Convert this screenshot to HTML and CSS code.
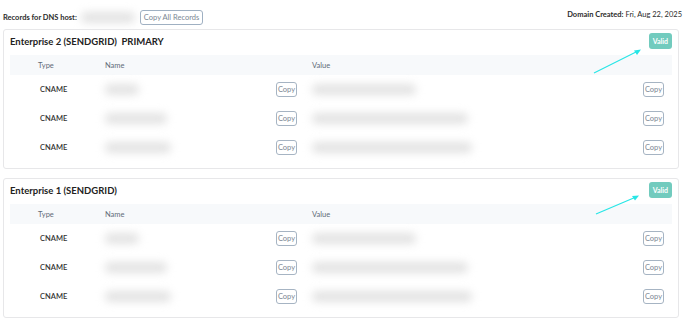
FILE: index.html
```html
<!DOCTYPE html>
<html lang="en">
<head>
    <meta charset="UTF-8">
    <meta name="viewport" content="width=device-width, initial-scale=1.0">
    <title>DNS Records</title>
    <link rel="stylesheet" href="styles.css">
</head>
<body>
    <div class="topbar">
        <div class="host">
            <span class="label">Records for DNS host:</span>
            <span class="blur host-blur"></span>
            <button class="copy-all">Copy All Records</button>
        </div>
        <div class="created"><b>Domain Created:</b> Fri, Aug 22, 2025</div>
    </div>

    <div class="card">
        <div class="card-head">
            <h3>Enterprise 2 (SENDGRID)&nbsp; PRIMARY</h3>
            <span class="badge">Valid</span>
        </div>
        <svg class="pointer" width="52" height="30" viewBox="0 0 52 30">
            <line x1="2" y1="27" x2="46" y2="5" stroke="#27e6e6" stroke-width="1.2"/>
            <polygon points="49,3.5 42,4.5 45,9" fill="#27e6e6"/>
        </svg>
        <div class="records">
            <div class="row head">
                <div class="c-type">Type</div>
                <div class="c-name">Name</div>
                <div></div>
                <div class="c-value">Value</div>
                <div></div>
            </div>
            <div class="row">
                <div class="c-type">CNAME</div>
                <div class="c-name"><span class="blur" style="width: 34px"></span></div>
                <div><button class="copy">Copy</button></div>
                <div class="c-value"><span class="blur" style="width: 104px"></span></div>
                <div><button class="copy">Copy</button></div>
            </div>
            <div class="row">
                <div class="c-type">CNAME</div>
                <div class="c-name"><span class="blur" style="width: 62px"></span></div>
                <div><button class="copy">Copy</button></div>
                <div class="c-value"><span class="blur" style="width: 156px"></span></div>
                <div><button class="copy">Copy</button></div>
            </div>
            <div class="row">
                <div class="c-type">CNAME</div>
                <div class="c-name"><span class="blur" style="width: 66px"></span></div>
                <div><button class="copy">Copy</button></div>
                <div class="c-value"><span class="blur" style="width: 160px"></span></div>
                <div><button class="copy">Copy</button></div>
            </div>
        </div>
    </div>

    <div class="card">
        <div class="card-head">
            <h3>Enterprise 1 (SENDGRID)</h3>
            <span class="badge">Valid</span>
        </div>
        <svg class="pointer second" width="52" height="30" viewBox="0 0 52 30">
            <line x1="2" y1="24" x2="42" y2="7" stroke="#27e6e6" stroke-width="1.2"/>
            <polygon points="45,5.5 38,6 41,10.5" fill="#27e6e6"/>
        </svg>
        <div class="records">
            <div class="row head">
                <div class="c-type">Type</div>
                <div class="c-name">Name</div>
                <div></div>
                <div class="c-value">Value</div>
                <div></div>
            </div>
            <div class="row">
                <div class="c-type">CNAME</div>
                <div class="c-name"><span class="blur" style="width: 34px"></span></div>
                <div><button class="copy">Copy</button></div>
                <div class="c-value"><span class="blur" style="width: 104px"></span></div>
                <div><button class="copy">Copy</button></div>
            </div>
            <div class="row">
                <div class="c-type">CNAME</div>
                <div class="c-name"><span class="blur" style="width: 62px"></span></div>
                <div><button class="copy">Copy</button></div>
                <div class="c-value"><span class="blur" style="width: 156px"></span></div>
                <div><button class="copy">Copy</button></div>
            </div>
            <div class="row">
                <div class="c-type">CNAME</div>
                <div class="c-name"><span class="blur" style="width: 66px"></span></div>
                <div><button class="copy">Copy</button></div>
                <div class="c-value"><span class="blur" style="width: 160px"></span></div>
                <div><button class="copy">Copy</button></div>
            </div>
        </div>
    </div>
</body>
</html>
```

FILE: styles.css
```css
body {
    font-family: Lato, "Open Sans", Arial, sans-serif;
    background-color: #fff;
    color: #2b2b2b;
    margin: 0;
    padding: 0 9px 0 3px;
}
.topbar {
    display: flex;
    justify-content: space-between;
    align-items: center;
    height: 29px;
    font-size: 7.5px;
}
.host {
    display: flex;
    align-items: center;
    margin-top: 5px;
}
.label {
    font-weight: 700;
}
.created {
    margin-top: 0;
    margin-right: -3px;
}
.host-blur {
    width: 54px;
    margin: 0 5px 0 4px;
}
.copy-all {
    font-family: inherit;
    font-size: 7.5px;
    color: #7c8794;
    background: #fff;
    border: 1px solid #9fb0c2;
    border-radius: 3px;
    height: 15px;
    padding: 0 3px;
}
.card {
    position: relative;
    border: 1px solid #e7e7e9;
    border-radius: 3px;
    padding: 0 6px 6px 6px;
    margin-bottom: 9px;
}
.card-head {
    display: flex;
    justify-content: space-between;
    align-items: flex-start;
    height: 25px;
}
.card-head h3 {
    margin: 6px 0 0 0;
    line-height: 12px;
    font-size: 9.5px;
    font-weight: 700;
    color: #222;
}
.badge {
    background-color: #72cbbe;
    color: #fff;
    font-size: 7px;
    font-weight: 700;
    border-radius: 3px;
    padding: 0 4px;
    height: 16px;
    line-height: 16px;
    margin-top: 3px;
}
.pointer {
    position: absolute;
    left: 588px;
    top: 16px;
}
.pointer.second {
    left: 590px;
    top: 11px;
}
.row {
    display: grid;
    grid-template-columns: 93px 169px 34px 1fr 33px;
    align-items: center;
    height: 29px;
    font-size: 7.5px;
}
.row.head {
    height: 20px;
    background-color: #f7f9fb;
    color: #5f6b78;
    font-size: 7.5px;
}
.c-type {
    padding-left: 28px;
}
.row:not(.head) .c-type {
    padding-left: 30px;
    font-weight: 600;
    color: #333;
}
.c-name {
    padding-left: 2px;
}
.c-value {
    padding-left: 6px;
}
.blur {
    display: inline-block;
    height: 11px;
    background-color: #e3e3e3;
    border-radius: 5px;
    filter: blur(4px);
    vertical-align: middle;
}
.copy {
    font-family: inherit;
    font-size: 7.5px;
    color: #7c8794;
    background: #fff;
    border: 1px solid #a6b4c3;
    border-radius: 3px;
    width: 21px;
    height: 15px;
    padding: 0;
    margin-left: 4px;
}
```
